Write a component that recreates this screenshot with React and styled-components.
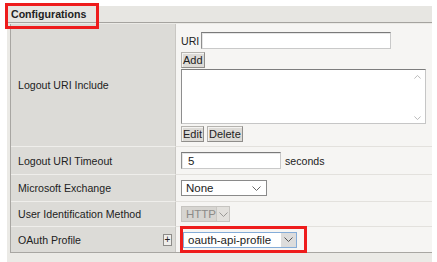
import React from 'react';
import styled, { createGlobalStyle } from 'styled-components';

const GlobalStyle = createGlobalStyle`
  html, body {
    margin: 0;
    padding: 0;
    background: #ffffff;
  }
  body {
    font-family: "Liberation Sans", Arial, sans-serif;
    font-size: 10.6px;
    color: #222222;
  }
`;

const Panel = styled.section`
  margin: 6px 0 0 7px;
  width: 425px;
  background: #ebeae6;
  padding-bottom: 10px;
`;

const PanelHead = styled.header`
  height: 16px;
  line-height: 16px;
  padding-left: 4px;
  background: #e7e6e2;
  border-bottom: 1px solid #a5a39f;
  font-weight: bold;
`;

// red annotation frame drawn over its content
const Marked = styled.span`
  position: relative;
  display: inline-block;

  &::after {
    content: '';
    position: absolute;
    pointer-events: none;
    border: 3px solid #ee1c1c;
    left: ${({ $l }) => $l}px;
    right: ${({ $r }) => $r}px;
    top: ${({ $t }) => $t}px;
    bottom: ${({ $b }) => $b}px;
  }
`;

const Table = styled.div`
  margin: 1px 0 0 3px;
  border-left: 1px solid #a8a6a2;
  border-bottom: 1px solid #a8a6a2;
`;

const Row = styled.div`
  display: grid;
  grid-template-columns: 165px 1fr;
  height: ${({ $h }) => ($h ? `${$h}px` : 'auto')};
  box-sizing: border-box;

  &:not(:last-child) > * {
    border-bottom: 1px solid #e3e1dd;
  }
  &:not(:last-child) > *:first-child {
    border-bottom-color: #efeeeb;
  }
`;

const LabelCell = styled.div`
  display: flex;
  align-items: center;
  justify-content: space-between;
  padding: 0 3px 0 7px;
  background: #dcdbd7;
  border-right: 1px solid #c9c7c3;
`;

const ValueCell = styled.div`
  display: flex;
  align-items: center;
  gap: 4px;
  padding-left: ${({ $pl }) => $pl || 5}px;
  background: #f6f5f3;
`;

const Stack = styled.div`
  display: flex;
  flex-direction: column;
  align-items: flex-start;
  padding: 8px 0 4px 5px;
  background: #f6f5f3;
`;

const Line = styled.div`
  display: flex;
  align-items: center;
  gap: ${({ $gap }) => $gap || 0}px;
  margin-top: ${({ $mt }) => $mt || 0}px;
`;

const TextInput = styled.input`
  box-sizing: border-box;
  width: ${({ $w }) => $w}px;
  height: 17px;
  margin: 0;
  padding: 0 0 0 ${({ $pl }) => $pl || 2}px;
  font: inherit;
  font-size: 11.5px;
  color: #222;
  background: #ffffff;
  border: 1px solid #c9c9c9;
  border-top-color: #7a7a7a;
  border-left-color: #8e8e8e;
  box-shadow: inset 1px 1px 0 #e6e6e6;
  outline: none;
`;

const Button = styled.button`
  box-sizing: border-box;
  height: 16px;
  margin: 0;
  padding: 0 1px;
  font: inherit;
  font-size: 11px;
  line-height: 14px;
  color: #222;
  background: #dddbd7;
  border: 1px solid #8f8d8a;
  border-top-color: #b5b3af;
  border-left-color: #b5b3af;
  box-shadow: inset 1px 1px 0 #f4f3f1;
`;

const ListBox = styled.div`
  box-sizing: border-box;
  display: flex;
  width: 245px;
  height: 55px;
  margin-top: 1px;
  background: #ffffff;
  border: 1px solid #c6c6c6;
  border-top-color: #7d7d7d;
  border-left-color: #8e8e8e;
`;

const ListArea = styled.div`
  flex: 1;
`;

const ScrollTrack = styled.div`
  width: 15px;
  display: flex;
  flex-direction: column;
  justify-content: space-between;
  align-items: center;
  padding: 5px 0 3px;
`;

const Select = styled.div`
  box-sizing: border-box;
  display: flex;
  align-items: center;
  width: ${({ $w }) => $w}px;
  height: 16px;
  font-size: 11.5px;
  color: ${({ $disabled }) => ($disabled ? '#8c8b88' : '#222')};
  background: ${({ $disabled }) => ($disabled ? '#d7d5d1' : '#ffffff')};
  border: 1px solid ${({ $border }) => $border};
`;

const SelectText = styled.span`
  flex: 1;
  padding-left: 4px;
  white-space: nowrap;
`;

const Arrow = styled.span`
  display: flex;
  align-items: center;
  justify-content: center;
  width: ${({ $w }) => $w}px;
  align-self: stretch;
  background: ${({ $bg }) => $bg || 'transparent'};
  border-left: ${({ $sep }) => ($sep ? `1px solid ${$sep}` : 'none')};
`;

const PlusButton = styled.span`
  box-sizing: border-box;
  width: 9px;
  height: 12px;
  display: flex;
  align-items: center;
  justify-content: center;
  font-size: 10px;
  line-height: 1;
  background: #efeeeb;
  border: 1px solid #8d8b88;
`;

const Chevron = ({ up, color = '#555', w = 9, h = 5 }) => (
  <svg width={w} height={h} viewBox="0 0 9 5">
    <polyline
      points={up ? '0.5,4.5 4.5,0.5 8.5,4.5' : '0.5,0.5 4.5,4.5 8.5,0.5'}
      fill="none"
      stroke={color}
      strokeWidth="1"
    />
  </svg>
);

export default function App() {
  return (
    <>
      <GlobalStyle />
      <Panel>
        <PanelHead>
          <Marked $l={-6} $r={-13} $t={-3} $b={-7}>Configurations</Marked>
        </PanelHead>
        <Table>
          <Row>
            <LabelCell>Logout URI Include</LabelCell>
            <Stack>
              <Line $gap={2}>
                <span>URI</span>
                <TextInput $w={190} />
              </Line>
              <Line $mt={3}>
                <Button>Add</Button>
              </Line>
              <ListBox>
                <ListArea />
                <ScrollTrack>
                  <Chevron up color="#a8a8a8" w={7} h={4} />
                  <Chevron color="#a8a8a8" w={7} h={4} />
                </ScrollTrack>
              </ListBox>
              <Line $gap={3} $mt={2}>
                <Button>Edit</Button>
                <Button>Delete</Button>
              </Line>
            </Stack>
          </Row>
          <Row $h={28}>
            <LabelCell>Logout URI Timeout</LabelCell>
            <ValueCell>
              <TextInput $w={100} $pl={6} defaultValue="5" />
              <span>seconds</span>
            </ValueCell>
          </Row>
          <Row $h={27}>
            <LabelCell>Microsoft Exchange</LabelCell>
            <ValueCell>
              <Select $w={86} $border="#8a8a8a">
                <SelectText>None</SelectText>
                <Arrow $w={20}>
                  <Chevron color="#666" />
                </Arrow>
              </Select>
            </ValueCell>
          </Row>
          <Row $h={25}>
            <LabelCell>User Identification Method</LabelCell>
            <ValueCell>
              <Select $w={49} $disabled $border="#c6c4c0">
                <SelectText>HTTP</SelectText>
                <Arrow $w={17} $bg="#e2e0dc" $sep="#c9c7c3">
                  <Chevron color="#9a9996" />
                </Arrow>
              </Select>
            </ValueCell>
          </Row>
          <Row $h={25}>
            <LabelCell>
              <span>OAuth Profile</span>
              <PlusButton>+</PlusButton>
            </LabelCell>
            <ValueCell $pl={7}>
              <Marked $l={-3} $r={-10} $t={-6} $b={-5}>
                <Select $w={114} $border="#84acd8">
                  <SelectText>oauth-api-profile</SelectText>
                  <Arrow $w={15} $bg="#dcdcdc">
                    <Chevron color="#555" />
                  </Arrow>
                </Select>
              </Marked>
            </ValueCell>
          </Row>
        </Table>
      </Panel>
    </>
  );
}
